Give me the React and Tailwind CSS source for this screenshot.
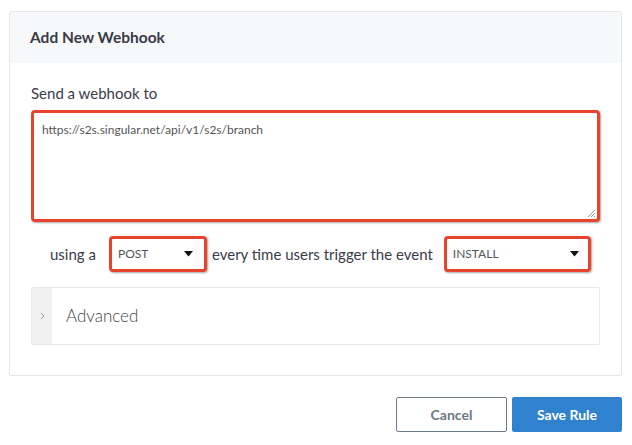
export default function App() {
  const font = { fontFamily: '"Lato", "Open Sans", sans-serif' };
  return (
    <div className="w-[632px] h-[445px] bg-white pt-[11px] pl-[9px]" style={font}>
      <div className="w-[613px] border border-[#e3e6ea] rounded-[2px]">
        <div className="h-[51px] bg-[#f7f8fa] flex items-center px-[20px]">
          <span className="text-[15.5px] font-bold text-[#3a3b48]">Add New Webhook</span>
        </div>
        <div className="px-[21px] pt-[20px] pb-[30px]">
          <div className="text-[15px] text-[#3a3b48] leading-[20px]">Send a webhook to</div>
          <div className="mt-[7px] h-[112px] border-[3px] border-[#e8432c] rounded-[4px] shadow-[1px_1px_2px_rgba(0,0,0,0.35)] relative bg-white">
            <div className="pl-[8px] pt-[9px] text-[12px] text-[#555] leading-[16px]">
              https://s2s.singular.net/api/v1/s2s/branch
            </div>
            <svg className="absolute right-[1px] bottom-[1px]" width="10" height="10" viewBox="0 0 10 10">
              <path d="M9 2 L2 9 M9 5 L5 9 M9 8 L8 9" stroke="#999" strokeWidth="1" />
            </svg>
          </div>
          <div className="mt-[14px] flex items-center pl-[19px] text-[15px] text-[#3a3b48]">
            <span>using a</span>
            <div className="ml-[13px] w-[98px] h-[36px] border-[3px] border-[#e8432c] rounded-[4px] shadow-[1px_1px_2px_rgba(0,0,0,0.35)] flex items-center justify-between pl-[6px] pr-[11px] bg-white">
              <span className="text-[12px] text-[#555]">POST</span>
              <svg width="9" height="6" viewBox="0 0 9 6"><path d="M0 0 H9 L4.5 5.5 Z" fill="#111" /></svg>
            </div>
            <span className="ml-[5px]">every time users trigger the event</span>
            <div className="ml-[11px] w-[147px] h-[36px] border-[3px] border-[#e8432c] rounded-[4px] shadow-[1px_1px_2px_rgba(0,0,0,0.35)] flex items-center justify-between pl-[6px] pr-[9px] bg-white">
              <span className="text-[12px] text-[#555]">INSTALL</span>
              <svg width="9" height="6" viewBox="0 0 9 6"><path d="M0 0 H9 L4.5 5.5 Z" fill="#111" /></svg>
            </div>
          </div>
          <div className="mt-[15px] h-[58px] border border-[#e8e8e8] rounded-[2px] flex">
            <div className="w-[20px] bg-[#f0f0f0] flex items-center justify-center">
              <svg width="5" height="8" viewBox="0 0 5 8"><path d="M1 1 L4 4 L1 7" stroke="#999" strokeWidth="1" fill="none" /></svg>
            </div>
            <div className="flex items-center pl-[14px] text-[17px] font-light text-[#444]">Advanced</div>
          </div>
        </div>
      </div>
      <div className="mt-[21px] flex justify-end gap-[5px] pr-[10px]">
        <button className="w-[111px] h-[35px] border border-[#6e7b89] rounded-[2px] bg-white text-[14px] font-bold text-[#6b7785]">Cancel</button>
        <button className="w-[110px] h-[35px] rounded-[2px] bg-[#3182ce] text-[14px] font-bold text-white">Save Rule</button>
      </div>
    </div>
  );
}
